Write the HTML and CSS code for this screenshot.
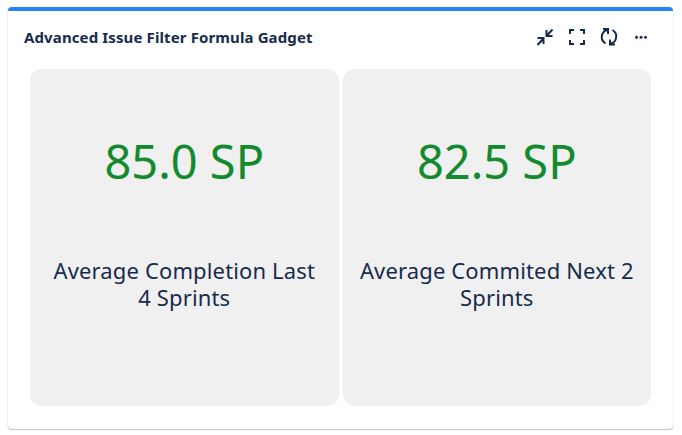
FILE: index.html
```html
<!DOCTYPE html>
<html lang="en">
<head>
<meta charset="utf-8">
<title>Advanced Issue Filter Formula Gadget</title>
<link rel="stylesheet" href="styles.css">
</head>
<body>
<section class="gadget">
  <header class="head">
    <h2 class="title">Advanced Issue Filter Formula Gadget</h2>
    <div class="tools">
      <svg class="ico" viewBox="0 0 24 24"><path d="M4.500 20l6-6.500M4.500 13h6v6M19.500 4.500l-6 6.500M13.500 5v6h6"/></svg>
      <svg class="ico" viewBox="0 0 24 24"><path d="M9 5H5v4M15 5h4v4M9 19H5v-4M15 19h4v-4"/></svg>
      <svg class="ico" viewBox="0 0 24 24"><path d="M8.500 18.500C5.500 16.500 4.500 14 4.800 11.500 5 9 6.500 6 10 5M6 4h5v5M15.500 5c3 2 4 4.500 3.700 7-.2 2.500-1.700 5.500-5.200 6.500M18 19.500h-5v-5"/></svg>
      <svg class="ico dots" viewBox="0 0 24 24"><circle cx="7.500" cy="12.300" r="1.500"/><circle cx="12" cy="12.300" r="1.500"/><circle cx="16.500" cy="12.300" r="1.500"/></svg>
    </div>
  </header>
  <div class="panels">
    <article class="panel">
      <div class="value">85.0 SP</div>
      <div class="label">Average Completion Last 4 Sprints</div>
    </article>
    <article class="panel">
      <div class="value">82.5 SP</div>
      <div class="label">Average Commited Next 2 Sprints</div>
    </article>
  </div>
</section>
</body>
</html>
```
FILE: styles.css
```css
* { box-sizing: border-box; }
html, body { margin: 0; height: 100%; background: #fff; }
body { padding: 7px 9px 5px 8px; font-family: "Noto Sans", "Open Sans", sans-serif; color: #172b4d; }
.gadget {
  height: 422px;
  background: #fff;
  border-top: 4px solid #2684ff;
  border-radius: 4px;
  box-shadow: 0 1px 1px rgba(9,30,66,.25), 0 0 1px rgba(9,30,66,.31);
  display: flex;
  flex-direction: column;
}
.head { height: 58px; padding: 0 24px 6px 16px; display: flex; align-items: center; justify-content: space-between; }
.title { margin: -1px 0 0; font-size: 15px; font-weight: 700; letter-spacing: .12px; }
.tools { display: flex; gap: 8px; margin-right: -4px; }
.ico { width: 24px; height: 24px; fill: none; stroke: #172b4d; stroke-width: 2; }
.dots { fill: #172b4d; stroke: none; }
.panels { display: flex; gap: 4px; padding: 0 22px; height: 337px; }
.panel { flex: 1; background: #f0f0f0; border-radius: 12px; text-align: center; padding: 56px 15px 0; }
.value { font-size: 47px; line-height: 72px; color: #138a2e; }
.label { margin-top: 60px; font-size: 22px; line-height: 27px; letter-spacing: .14px; }
```
